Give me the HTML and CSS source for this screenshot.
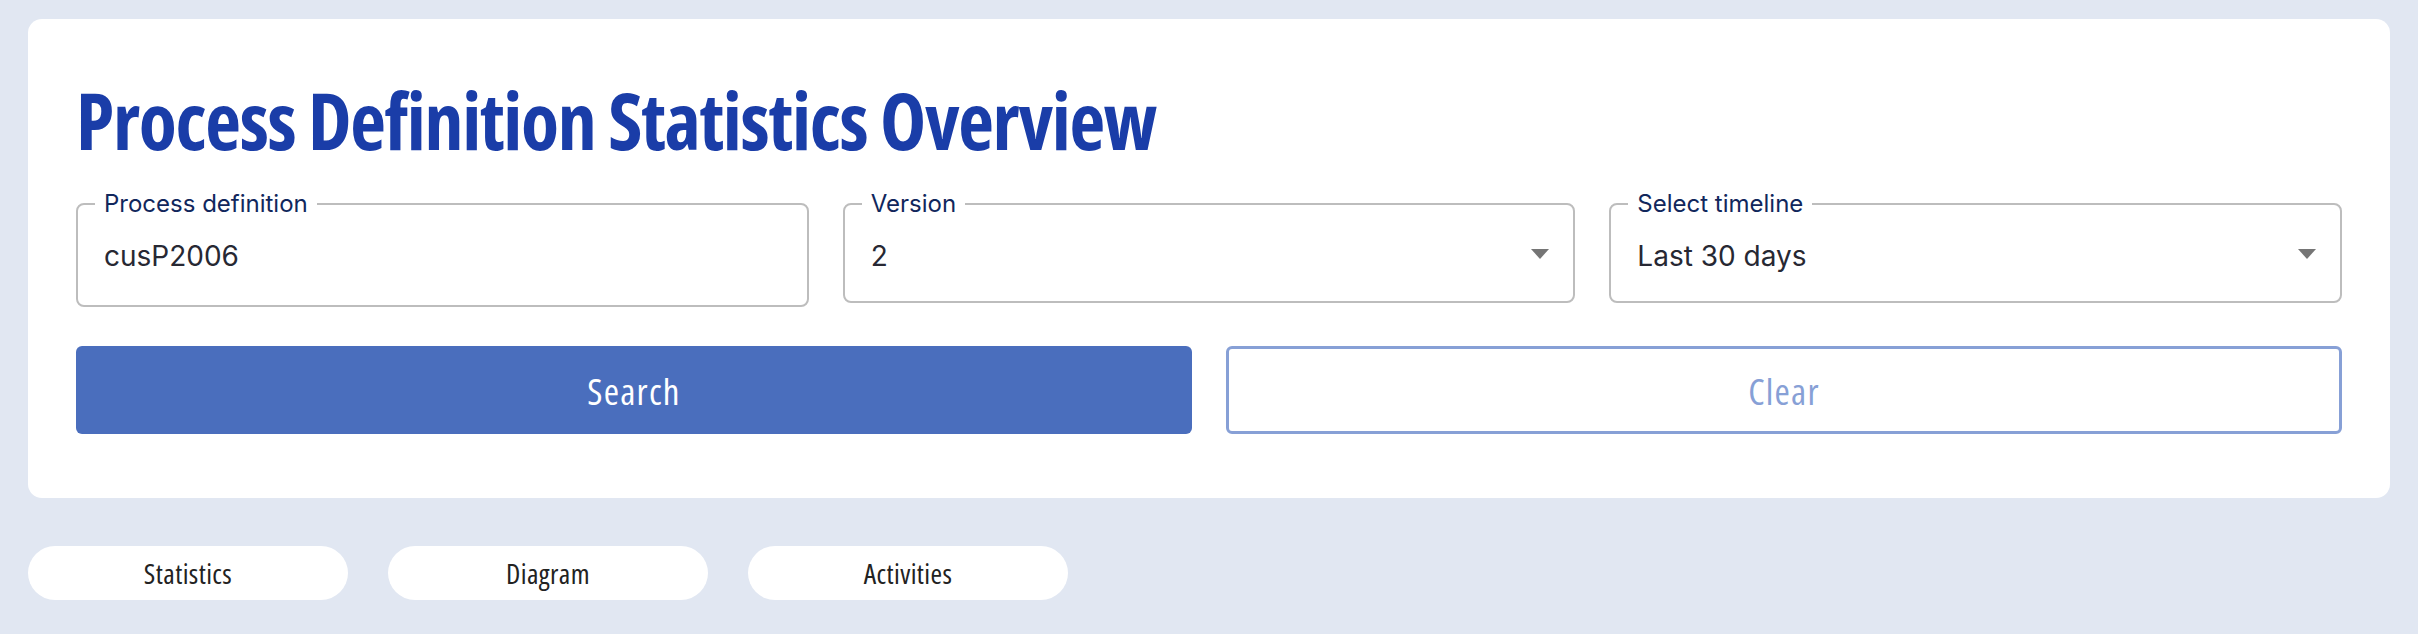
FILE: index.html
```html
<!DOCTYPE html>
<html>

<head>
    <title>Process Definition Statistics Overview</title>

    <link rel="stylesheet" href="styles.css">
</head>

<body>

    <div class="card">
        <h1 class="title">Process Definition Statistics Overview</h1>

        <div class="fields">
            <fieldset class="field">
                <legend>Process definition</legend>
                <div class="field-value field-input">cusP2006</div>
            </fieldset>

            <fieldset class="field">
                <legend>Version</legend>
                <div class="field-value field-select">
                    <span>2</span>
                    <span class="arrow"></span>
                </div>
            </fieldset>

            <fieldset class="field">
                <legend>Select timeline</legend>
                <div class="field-value field-select">
                    <span>Last 30 days</span>
                    <span class="arrow"></span>
                </div>
            </fieldset>
        </div>

        <div class="actions">
            <button class="btn btn-primary">Search</button>
            <button class="btn btn-outline">Clear</button>
        </div>
    </div>

    <nav class="tabs">
        <button class="tab">Statistics</button>
        <button class="tab">Diagram</button>
        <button class="tab">Activities</button>
    </nav>

</body>

</html>
```

FILE: styles.css
```css
body {
    margin: 0;
    padding: 19px 28px;
    background: #e1e7f2;
    font-family: "Inter", "Liberation Sans", sans-serif;
}

/**
 * Condensed display font for headings and buttons
 */
.title,
.btn,
.tab {
    font-family: "Open Sans", "Roboto", sans-serif;
    font-stretch: 75%;
}

.card {
    background: #fff;
    border-radius: 14px;
    padding: 62px 48px 64px 48px;
}

.title {
    margin: 0 0 30px 0;
    font-size: 78px;
    line-height: 1;
    font-weight: 700;
    letter-spacing: -1.3px;
    color: #1a3da8;
}

/**
 * Outlined form fields
 */
.fields {
    display: grid;
    grid-template-columns: 1fr 1fr 1fr;
    gap: 34px;
    align-items: start;
}

.field {
    margin: 0;
    min-width: 0;
    padding: 0 24px 0 26px;
    border: 2px solid #bdbdbd;
    border-radius: 8px;
}

.field legend {
    margin-left: -9px;
    padding: 0 9px;
    font-size: 24px;
    line-height: 29px;
    color: #11275c;
}

.field-value {
    padding: 21px 0 32px 0;
    font-size: 28px;
    line-height: 34px;
    color: #272833;
}

.field-select {
    display: flex;
    align-items: center;
    justify-content: space-between;
    padding-bottom: 28px;
}

.arrow {
    width: 0;
    height: 0;
    margin-top: -4px;
    border-left: 9px solid transparent;
    border-right: 9px solid transparent;
    border-top: 10px solid #757575;
}

/**
 * Buttons
 */
.actions {
    display: grid;
    grid-template-columns: 1fr 1fr;
    gap: 34px;
    margin-top: 39px;
}

.btn {
    height: 88px;
    border-radius: 6px;
    font-size: 37px;
    font-weight: 500;
    font-stretch: 85%;
    letter-spacing: 1.2px;
    cursor: pointer;
}

.btn-primary {
    background: #4a6ebd;
    border: none;
    color: #fff;
}

.btn-outline {
    background: #fff;
    border: 3px solid #87a0d6;
    color: #87a0d6;
}

/**
 * Tabs under the card
 */
.tabs {
    display: flex;
    gap: 40px;
    margin-top: 48px;
}

.tab {
    width: 320px;
    height: 54px;
    border: none;
    border-radius: 27px;
    background: #fff;
    font-size: 28px;
    letter-spacing: 0.4px;
    color: #222;
    cursor: pointer;
}
```
